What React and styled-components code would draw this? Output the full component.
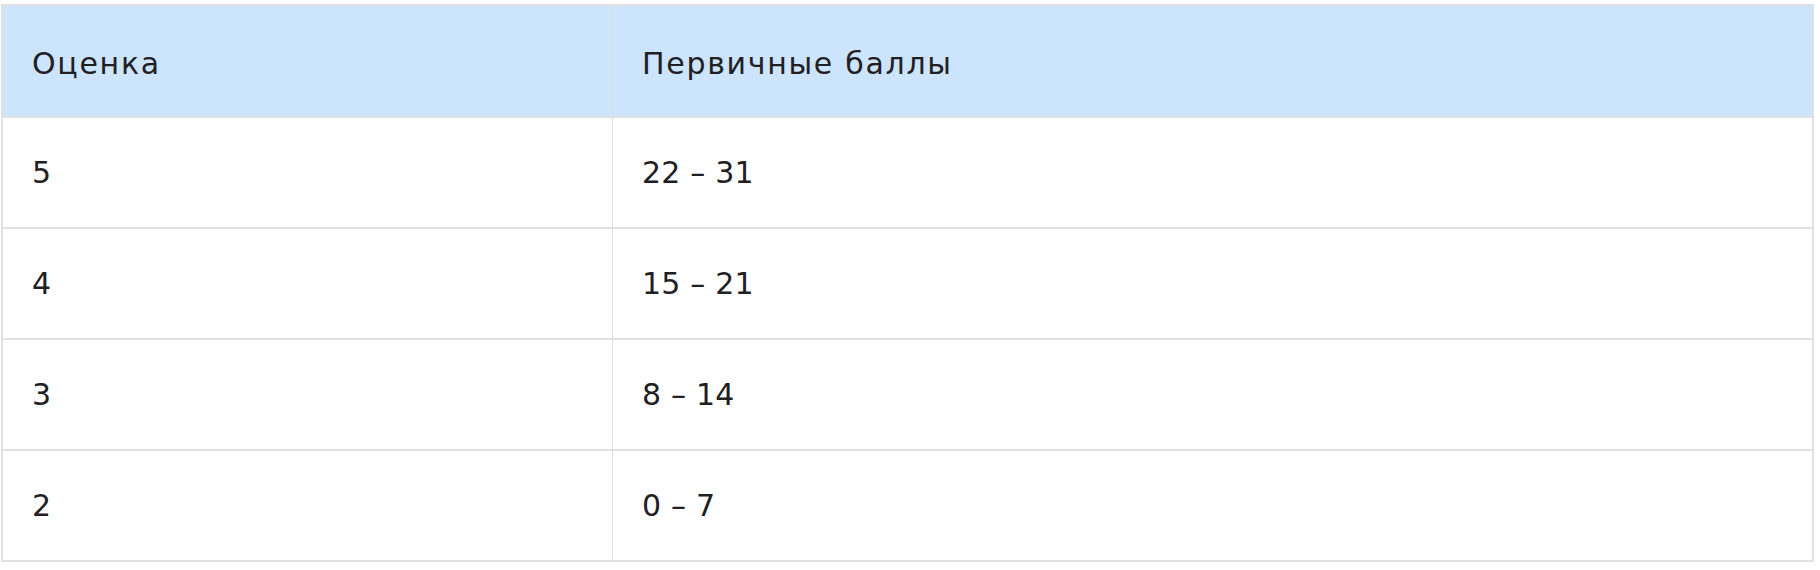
import React from 'react';
import styled, { createGlobalStyle } from 'styled-components';

const grades = [
  { mark: '5', points: '22 – 31' },
  { mark: '4', points: '15 – 21' },
  { mark: '3', points: '8 – 14' },
  { mark: '2', points: '0 – 7' },
];

const GlobalStyle = createGlobalStyle`
  body {
    margin: 0;
    background: #fff;
    font-family: "DejaVu Sans", Inter, sans-serif;
  }
`;

const Wrap = styled.div`
  padding: 4px 6px 0 1px;
`;

const Table = styled.table`
  width: 100%;
  border-collapse: collapse;
  border: 2px solid #dfe1e4;
  color: #1f2023;
  font-size: 30px;
`;

const HeadRow = styled.tr`
  height: 112px;
  background: #cce4fc;
`;

const Row = styled.tr`
  height: 111px;
  border-top: 2px solid #dfe1e4;
`;

const Cell = styled.td`
  padding: 0 30px 0 29px;
  text-align: left;
  font-weight: 400;
  letter-spacing: 0.2px;
  vertical-align: middle;
  width: ${p => (p.$first ? '550px' : 'auto')};
  border-left: ${p => (p.$first ? 'none' : '1px solid #dcdee1')};
`;

const HeadCell = styled(Cell).attrs({ as: 'th' })`
  padding-top: 5px;
  letter-spacing: 1.7px;
`;

const App = () => (
  <>
    <GlobalStyle />
    <Wrap>
      <Table>
        <thead>
          <HeadRow>
            <HeadCell $first>Оценка</HeadCell>
            <HeadCell>Первичные баллы</HeadCell>
          </HeadRow>
        </thead>
        <tbody>
          {grades.map(g => (
            <Row key={g.mark}>
              <Cell $first>{g.mark}</Cell>
              <Cell>{g.points}</Cell>
            </Row>
          ))}
        </tbody>
      </Table>
    </Wrap>
  </>
);

export default App;
